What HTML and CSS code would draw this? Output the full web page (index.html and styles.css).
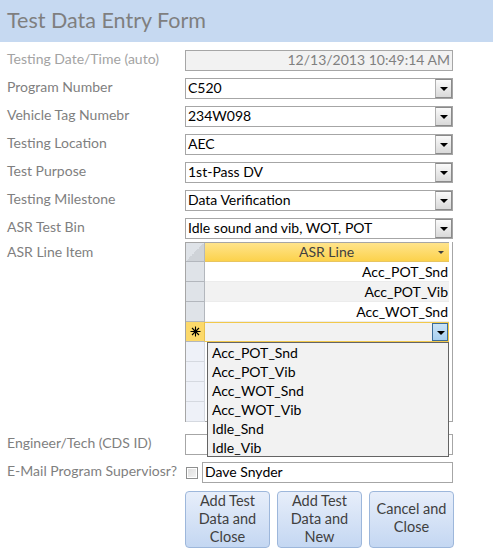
FILE: index.html
```html
<!DOCTYPE html>
<html lang="en">
<head>
    <meta charset="UTF-8">
    <meta name="viewport" content="width=device-width, initial-scale=1.0">
    <title>Test Data Entry Form</title>
    <link rel="stylesheet" href="styles.css">
</head>
<body>
    <div class="header">Test Data Entry Form</div>

    <div class="form">
        <div class="row">
            <label class="dim">Testing Date/Time (auto)</label>
            <div class="field locked">12/13/2013 10:49:14 AM</div>
        </div>
        <div class="row">
            <label>Program Number</label>
            <div class="field combo"><span>C520</span><i class="btn"></i></div>
        </div>
        <div class="row">
            <label>Vehicle Tag Numebr</label>
            <div class="field combo"><span>234W098</span><i class="btn"></i></div>
        </div>
        <div class="row">
            <label>Testing Location</label>
            <div class="field combo"><span>AEC</span><i class="btn"></i></div>
        </div>
        <div class="row">
            <label>Test Purpose</label>
            <div class="field combo"><span>1st-Pass DV</span><i class="btn"></i></div>
        </div>
        <div class="row">
            <label>Testing Milestone</label>
            <div class="field combo"><span>Data Verification</span><i class="btn"></i></div>
        </div>
        <div class="row">
            <label>ASR Test Bin</label>
            <div class="field combo"><span>Idle sound and vib, WOT, POT</span><i class="btn"></i></div>
        </div>

        <div class="row sheet-row">
            <label>ASR Line Item</label>
            <div class="sheet">
                <div class="line head">
                    <div class="sel corner"></div>
                    <div class="cell">ASR Line<i class="sort"></i></div>
                </div>
                <div class="line">
                    <div class="sel"></div>
                    <div class="cell">Acc_POT_Snd</div>
                </div>
                <div class="line alt">
                    <div class="sel"></div>
                    <div class="cell">Acc_POT_Vib</div>
                </div>
                <div class="line">
                    <div class="sel"></div>
                    <div class="cell">Acc_WOT_Snd</div>
                </div>
                <div class="line current">
                    <div class="sel star">
                        <svg width="11" height="11" viewBox="0 0 11 11">
                            <path d="M5.5 0.5v10M0.5 5.5h10M2 2l7 7M9 2l-7 7" stroke="#000" stroke-width="1.1" fill="none"/>
                        </svg>
                    </div>
                    <div class="cell"><i class="btn blue"></i></div>
                </div>
                <div class="line empty"><div class="sel"></div><div class="cell"></div></div>
                <div class="line empty"><div class="sel"></div><div class="cell"></div></div>
                <div class="line empty"><div class="sel"></div><div class="cell"></div></div>
                <div class="line empty"><div class="sel"></div><div class="cell"></div></div>

                <ul class="dropdown">
                    <li>Acc_POT_Snd</li>
                    <li>Acc_POT_Vib</li>
                    <li>Acc_WOT_Snd</li>
                    <li>Acc_WOT_Vib</li>
                    <li>Idle_Snd</li>
                    <li>Idle_Vib</li>
                </ul>
            </div>
        </div>

        <div class="row">
            <label>Engineer/Tech (CDS ID)</label>
            <div class="field"></div>
        </div>
        <div class="row">
            <label>E-Mail Program Superviosr?</label>
            <div class="check-wrap">
                <span class="check"></span>
                <div class="field">Dave Snyder</div>
            </div>
        </div>

        <div class="buttons">
            <button>Add Test Data and Close</button>
            <button>Add Test Data and New</button>
            <button>Cancel and Close</button>
        </div>
    </div>
</body>
</html>
```

FILE: styles.css
```css
* {
    margin: 0;
    padding: 0;
    box-sizing: border-box;
}

body {
    font-family: Lato, "Liberation Sans", sans-serif;
    font-size: 14px;
    color: #000;
    background: #fff;
}

ul {
    list-style: none;
}

.header {
    height: 42px;
    background-color: #c6d9f1;
    color: #7f7f7f;
    font-size: 21.5px;
    line-height: 40px;
    padding-left: 7px;
}

.form {
    padding: 8px 0 0 7px;
}

.row {
    display: flex;
    height: 21px;
    margin-bottom: 7px;
}

.row label {
    width: 178px;
    color: #7f7f7f;
    line-height: 18px;
}

.row label.dim {
    color: #a3a3a3;
}

.field {
    width: 268px;
    height: 21px;
    border: 1px solid #a6a6a6;
    line-height: 18px;
    padding-left: 2px;
    background: #fff;
}

.locked {
    background: #f2f2f2;
    color: #808080;
    text-align: right;
    padding-right: 2px;
}

.combo {
    display: flex;
    justify-content: space-between;
}

.btn {
    width: 17px;
    height: 19px;
    border: 1px solid #8a8a8a;
    border-left-color: #b0b0b0;
    background: linear-gradient(#fafafa, #d9d9d9);
    position: relative;
}

.btn::after {
    content: "";
    position: absolute;
    left: 4px;
    top: 7px;
    border-left: 4px solid transparent;
    border-right: 4px solid transparent;
    border-top: 4px solid #000;
}

/* datasheet */
.sheet-row {
    height: 180px;
    margin-top: -4px;
    margin-bottom: 12px;
}

.sheet-row label {
    line-height: 19px;
}

.sheet {
    position: relative;
    width: 268px;
    height: 180px;
    border: 1px solid #a6a6a6;
    border-top: none;
    background: #fff;
    padding-right: 3px;
}

.line {
    display: flex;
    height: 20px;
}

.sel {
    width: 19px;
    background: #dfe3e8;
    border-right: 1px solid #b3b7bd;
    border-bottom: 1px solid #b3b7bd;
}

.cell {
    flex: 1;
    line-height: 19px;
    text-align: right;
    padding-right: 1px;
    border-bottom: 1px solid #ececec;
}

.alt .cell {
    background: #f2f2f2;
}

.head {
    border-top: 1px solid #a6a6a6;
}

.head .sel.corner {
    background: linear-gradient(135deg, #dfe3e8 50%, #cfd3d8 50%);
}

.head .cell {
    position: relative;
    text-align: center;
    color: #404040;
    background: linear-gradient(#ffe48c, #fcd24c);
    border-bottom: 1px solid #e8c560;
    line-height: 18px;
}

.sort {
    position: absolute;
    right: 5px;
    top: 8px;
    border-left: 3px solid transparent;
    border-right: 3px solid transparent;
    border-top: 3px solid #404040;
}

.current .sel {
    display: flex;
    align-items: center;
    justify-content: center;
    background: #fcd96a;
    border-right-color: #e8c14e;
}

.current .cell {
    display: flex;
    justify-content: flex-end;
    background: #f2f2f2;
    border: 1px solid #f2c94c;
    border-left: none;
    padding: 0;
}

.btn.blue {
    width: 16px;
    height: 18px;
    border: 1px solid #3c6c98;
    background: linear-gradient(#c9e3f8, #a9d0f0);
}

.empty .sel {
    background: #eef1f8;
    border-right-color: #d5d9e0;
    border-bottom-color: #d5d9e0;
}

.empty .cell {
    border-bottom: none;
}

.dropdown {
    position: absolute;
    left: 21px;
    top: 100px;
    width: 242px;
    height: 115px;
    border: 1px solid #646464;
    background: #f2f2f2;
    padding: 0 0 0 4px;
    z-index: 2;
}

.dropdown li {
    height: 19px;
    line-height: 19px;
}

.check-wrap {
    display: flex;
    align-items: center;
}

.check {
    width: 12px;
    height: 12px;
    margin: 0 4px 0 1px;
    border: 1px solid #8e8f8f;
    background: linear-gradient(135deg, #dcdcdc, #f5f5f5);
    box-shadow: inset 0 0 0 1px #fff;
}

.check-wrap .field {
    width: 251px;
}

.buttons {
    display: flex;
    gap: 7px;
    margin-left: 178px;
    margin-top: 8px;
}

.buttons button {
    width: 85px;
    height: 57px;
    border: 1px solid #9db7db;
    border-radius: 4px;
    background: linear-gradient(#e7eefa, #c4d7f2);
    color: #404040;
    font-family: Lato, "Liberation Sans", sans-serif;
    font-size: 14.5px;
    line-height: 18px;
    padding: 0 6px 3px;
}
```
